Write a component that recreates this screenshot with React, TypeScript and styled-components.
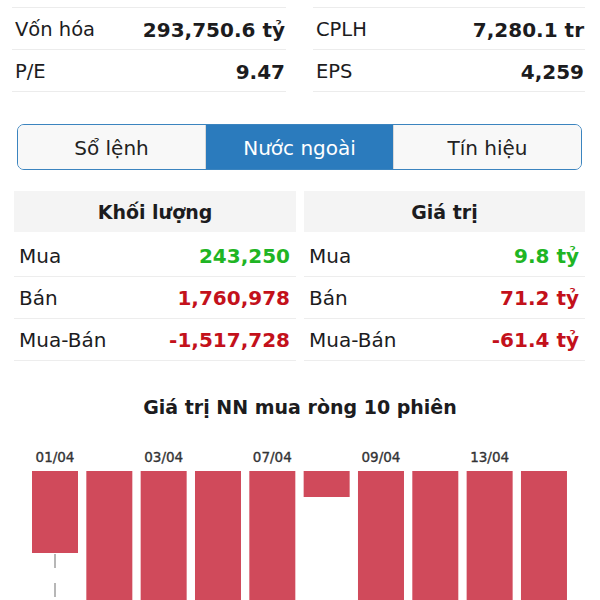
import React from "react";
import styled, { createGlobalStyle } from "styled-components";

const GlobalStyle = createGlobalStyle`
  html, body { margin: 0; padding: 0; background: #ffffff; }
  body { font-family: "DejaVu Sans", "Noto Sans", "Liberation Sans", sans-serif; color: #1c1c1e; }
  * { box-sizing: border-box; }
`;

const Page = styled.div`
  width: 600px;
  height: 600px;
  overflow: hidden;
  background: #fff;
`;

const StatsGrid = styled.div`
  display: grid;
  grid-template-columns: 274px 272px;
  column-gap: 27px;
  padding: 0 15px 0 12px;
  margin-top: -34px;
`;

const StatColumn = styled.div`
  display: flex;
  flex-direction: column;
`;

const StatRow = styled.div`
  height: 42px;
  display: flex;
  align-items: center;
  justify-content: space-between;
  border-bottom: 1px solid #ececec;
  padding: 2px 1px 0 3px;
`;

const StatLabel = styled.span`
  font-size: 19.5px;
  font-weight: 400;
  color: #1c1c1e;
`;

const StatValue = styled.span`
  font-size: 20px;
  font-weight: 700;
  color: #1c1c1e;
`;

const TabBar = styled.div`
  display: flex;
  height: 46px;
  margin: 32px 18px 0 17px;
  border: 1.5px solid #3b84bf;
  border-radius: 7px;
  overflow: hidden;
  background: #f8f8f8;
`;

const Tab = styled.div<{ $active?: boolean }>`
  flex: 1;
  display: flex;
  align-items: center;
  justify-content: center;
  padding-top: 2px;
  font-size: 20px;
  font-weight: 400;
  color: ${(p) => (p.$active ? "#ffffff" : "#222222")};
  background: ${(p) => (p.$active ? "#2b7bbd" : "#f8f8f8")};
  & + & {
    border-left: 1px solid #d9d9d9;
  }
`;

const TablesRow = styled.div`
  display: grid;
  grid-template-columns: 282px 281px;
  column-gap: 8px;
  padding: 0 15px 0 14px;
  margin-top: 21px;
`;

const Table = styled.div`
  display: flex;
  flex-direction: column;
`;

const TableHeader = styled.div`
  height: 41px;
  background: #f4f4f4;
  display: flex;
  align-items: center;
  justify-content: center;
  font-size: 19px;
  font-weight: 700;
  color: #1c1c1e;
`;

const TableBody = styled.div`
  padding-top: 3px;
`;

const TableRow = styled.div`
  height: 42px;
  display: flex;
  align-items: center;
  justify-content: space-between;
  border-bottom: 1px solid #ededed;
  padding: 0 6px 0 5px;
`;

const CellLabel = styled.span`
  font-size: 20px;
  font-weight: 400;
  color: #1c1c1e;
`;

const CellValue = styled.span<{ $tone: "up" | "down" }>`
  font-size: 20px;
  font-weight: 700;
  color: ${(p) => (p.$tone === "up" ? "#1fb524" : "#c3111b")};
`;

const ChartTitle = styled.div`
  margin-top: 34px;
  text-align: center;
  font-size: 19px;
  font-weight: 700;
  color: #1c1c1e;
  line-height: 24px;
`;

const ChartWrap = styled.div`
  margin-top: 24px;
  height: 200px;
`;

const topStats = [
  [
    { label: "Khối lượng TB", value: "3,512,300" },
    { label: "Vốn hóa", value: "293,750.6 tỷ" },
    { label: "P/E", value: "9.47" },
  ],
  [
    { label: "Beta (1y)", value: "(0.82)" },
    { label: "CPLH", value: "7,280.1 tr" },
    { label: "EPS", value: "4,259" },
  ],
];

const tables = [
  {
    title: "Khối lượng",
    rows: [
      { label: "Mua", value: "243,250", tone: "up" as const },
      { label: "Bán", value: "1,760,978", tone: "down" as const },
      { label: "Mua-Bán", value: "-1,517,728", tone: "down" as const },
    ],
  },
  {
    title: "Giá trị",
    rows: [
      { label: "Mua", value: "9.8 tỷ", tone: "up" as const },
      { label: "Bán", value: "71.2 tỷ", tone: "down" as const },
      { label: "Mua-Bán", value: "-61.4 tỷ", tone: "down" as const },
    ],
  },
];

const bars = [
  { label: "01/04", h: 82 },
  { label: "", h: 200 },
  { label: "03/04", h: 200 },
  { label: "", h: 200 },
  { label: "07/04", h: 200 },
  { label: "", h: 26 },
  { label: "09/04", h: 200 },
  { label: "", h: 200 },
  { label: "13/04", h: 200 },
  { label: "", h: 200 },
];

function NetChart() {
  const top = 28;
  const x0 = 32;
  const pitch = 54.33;
  const w = 46;
  return (
    <svg width="600" height="200" viewBox="0 0 600 200">
      {bars.map((b, i) => {
        const x = x0 + i * pitch;
        return (
          <g key={i}>
            {b.label && (
              <text
                x={x + w / 2}
                y={top - 9}
                textAnchor="middle"
                fontFamily="'DejaVu Sans', 'Noto Sans', sans-serif"
                fontSize="13.5"
                fontWeight="400"
                fill="#333335"
                stroke="#333335"
                strokeWidth="0.35"
              >
                {b.label}
              </text>
            )}
            <rect x={x} y={top} width={w} height={b.h} fill="#d04a5b" />
          </g>
        );
      })}
      <line
        x1={x0 + w / 2}
        x2={x0 + w / 2}
        y1={top + 83}
        y2={200}
        stroke="#a0a0a0"
        strokeWidth="1.5"
        strokeDasharray="14 15"
      />
    </svg>
  );
}

export default function App() {
  return (
    <Page>
      <GlobalStyle />
      <StatsGrid>
        {topStats.map((col, ci) => (
          <StatColumn key={ci}>
            {col.map((r) => (
              <StatRow key={r.label}>
                <StatLabel>{r.label}</StatLabel>
                <StatValue>{r.value}</StatValue>
              </StatRow>
            ))}
          </StatColumn>
        ))}
      </StatsGrid>

      <TabBar>
        <Tab>Sổ lệnh</Tab>
        <Tab $active>Nước ngoài</Tab>
        <Tab>Tín hiệu</Tab>
      </TabBar>

      <TablesRow>
        {tables.map((t) => (
          <Table key={t.title}>
            <TableHeader>{t.title}</TableHeader>
            <TableBody>
              {t.rows.map((r) => (
                <TableRow key={r.label}>
                  <CellLabel>{r.label}</CellLabel>
                  <CellValue $tone={r.tone}>{r.value}</CellValue>
                </TableRow>
              ))}
            </TableBody>
          </Table>
        ))}
      </TablesRow>

      <ChartTitle>Giá trị NN mua ròng 10 phiên</ChartTitle>
      <ChartWrap>
        <NetChart />
      </ChartWrap>
    </Page>
  );
}
